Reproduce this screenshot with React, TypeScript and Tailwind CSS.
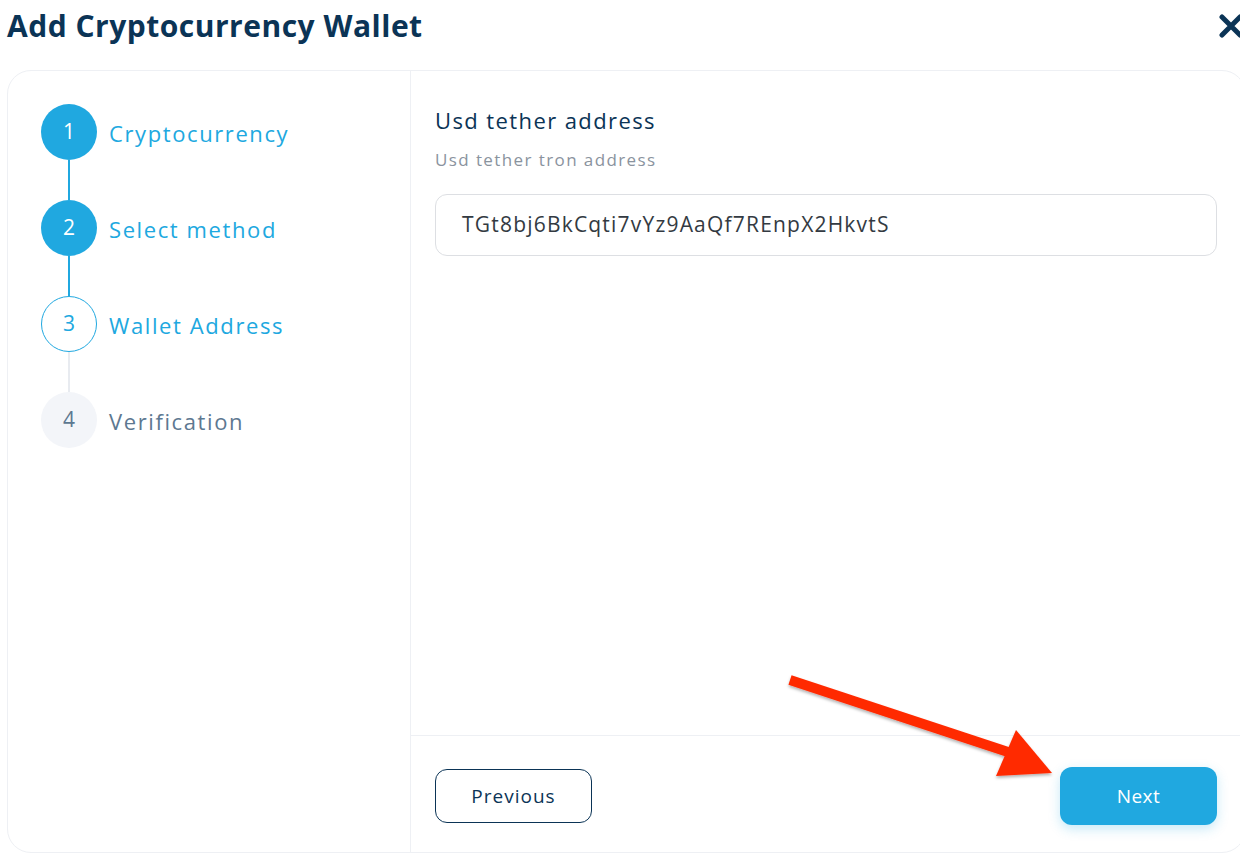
import React from "react";

const steps = [
  { n: 1, label: "Cryptocurrency", state: "done" },
  { n: 2, label: "Select method", state: "done" },
  { n: 3, label: "Wallet Address", state: "active" },
  { n: 4, label: "Verification", state: "todo" },
];

export default function App() {
  return (
    <div className="relative w-[1240px] h-[854px] overflow-hidden bg-white font-['Open_Sans',sans-serif]">
      <div className="flex h-[50px] items-center justify-between pl-[7px]">
        <h1 className="text-[30px] font-bold text-[#0b3456] tracking-[0.5px]">Add Cryptocurrency Wallet</h1>
        <svg width="26" height="26" viewBox="0 0 26 26" className="mr-[-4px] mt-[2px]">
          <path d="M4 4 L22 22 M22 4 L4 22" stroke="#0b3456" strokeWidth="5" strokeLinecap="round" />
        </svg>
      </div>
      <div className="ml-[7px] mt-[20px] flex h-[783px] w-[1239px] rounded-[24px] border border-[#eef0f4]">
        <div className="w-[403px] shrink-0 border-r border-[#eef0f4] pl-[33px] pt-[33px]">
          {steps.map((s, i) => (
            <div key={s.n}>
              <div className="flex items-center">
                {s.state === "done" && (
                  <div className="flex h-[56px] w-[56px] items-center justify-center rounded-full bg-[#20a8e0] text-[21px] text-white">{s.n}</div>
                )}
                {s.state === "active" && (
                  <div className="flex h-[56px] w-[56px] items-center justify-center rounded-full border border-[#20a8e0] bg-white text-[21px] text-[#20a8e0]">{s.n}</div>
                )}
                {s.state === "todo" && (
                  <div className="flex h-[56px] w-[56px] items-center justify-center rounded-full bg-[#f3f5f9] text-[21px] text-[#5d7891]">{s.n}</div>
                )}
                <span className={"ml-[12px] pt-[3px] text-[22px] tracking-[1.6px] " + (s.state === "todo" ? "text-[#5d7891]" : "text-[#20a8e0]")}>{s.label}</span>
              </div>
              {i < steps.length - 1 && (
                <div className={"ml-[27px] h-[40px] w-[2px] " + (i < 2 ? "bg-[#20a8e0]" : "bg-[#e8ebf0]")} />
              )}
            </div>
          ))}
        </div>
        <div className="flex flex-1 flex-col">
          <div className="flex-1 pl-[24px] pr-[28px] pt-[34px]">
            <div className="text-[22px] leading-[30px] tracking-[1.4px] text-[#0b3456]">Usd tether address</div>
            <div className="mt-[14px] text-[17px] leading-[22px] tracking-[1.4px] text-[#8a939e]">Usd tether tron address</div>
            <div className="mt-[23px] flex h-[62px] items-center rounded-[12px] border border-[#dddfe3] px-[26px] text-[21px] tracking-[1.2px] text-[#333a42]">
              TGt8bj6BkCqti7vYz9AaQf7REnpX2HkvtS
            </div>
          </div>
          <div className="flex h-[117px] items-center justify-between border-t border-[#eef0f4] pl-[24px] pr-[28px] pt-[4px]">
            <button className="flex h-[54px] w-[157px] items-center justify-center rounded-[12px] border border-[#0b3456] text-[19px] tracking-[1px] text-[#0b3456]">Previous</button>
            <button className="flex h-[58px] w-[157px] items-center justify-center rounded-[12px] bg-[#20a8e0] text-[19px] tracking-[0.5px] text-white shadow-[0_4px_12px_rgba(32,168,224,0.25)]">Next</button>
          </div>
        </div>
      </div>
      <svg className="pointer-events-none absolute left-0 top-0" width="1240" height="854" viewBox="0 0 1240 854">
        <defs>
          <filter id="sh" x="-10%" y="-10%" width="120%" height="130%">
            <feDropShadow dx="0" dy="2" stdDeviation="1.5" floodColor="#000" floodOpacity="0.3" />
          </filter>
        </defs>
        <g filter="url(#sh)">
          <path d="M790 680 L1008 752" stroke="#ff2a00" strokeWidth="10" />
          <polygon points="1016,730 996,776 1052,773" fill="#ff2a00" />
        </g>
      </svg>
    </div>
  );
}
